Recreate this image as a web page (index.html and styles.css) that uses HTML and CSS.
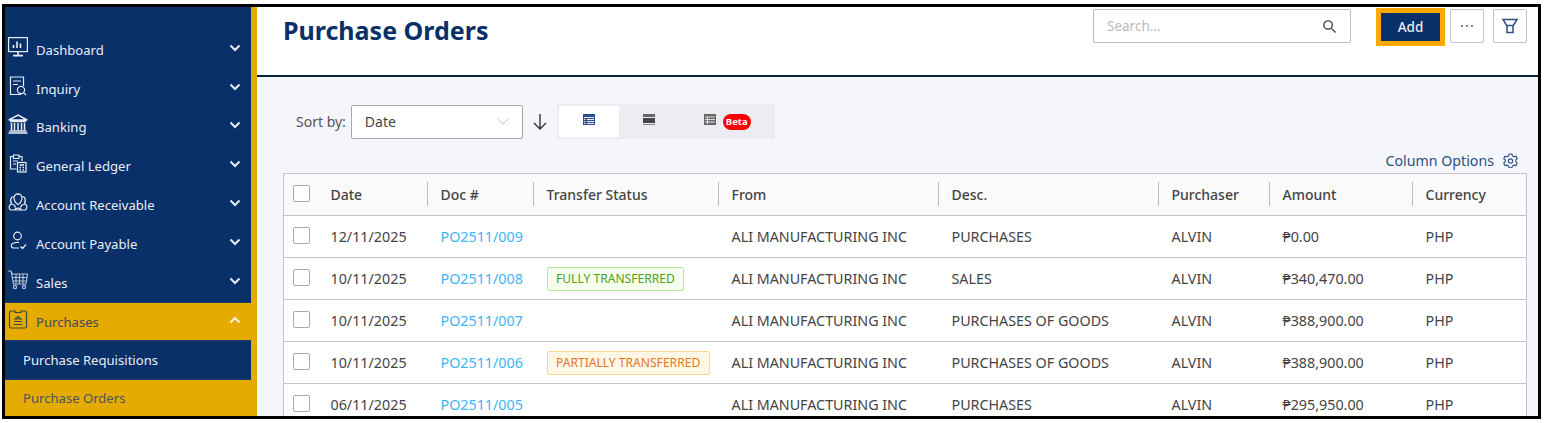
FILE: index.html
```html
<!doctype html>
<html lang="en">
  <head>
    <meta charset="UTF-8" />
    <title>Purchase Orders</title>
    <link rel="stylesheet" href="styles.css">
  </head>
  <body>
    <div class="frame">
      <nav class="sidebar">
        <a class="nav-item">
          <svg class="nav-icon" viewBox="0 0 20 20"><rect x="0.6" y="0.6" width="18.8" height="14"/><path d="M10 14.6v3.4M5 18.6h10M5.5 11v-3M9 11V4.5M12.5 11V6.5" stroke-width="1.600"/></svg>
          <span class="nav-label">Dashboard</span>
          <svg class="chev" viewBox="0 0 12 8"><path d="M1.5 1.5 6 6l4.5-4.5"/></svg>
        </a>
        <a class="nav-item">
          <svg class="nav-icon" viewBox="0 0 20 20"><path d="M13 18.5H2.5V1h13v9M5 5h8M5 8.5h5"/><circle cx="13" cy="14" r="3.6"/><path d="m15.6 16.6 2.4 2.4"/></svg>
          <span class="nav-label">Inquiry</span>
          <svg class="chev" viewBox="0 0 12 8"><path d="M1.5 1.5 6 6l4.5-4.5"/></svg>
        </a>
        <a class="nav-item">
          <svg class="nav-icon" viewBox="0 0 20 20"><path d="M0.8 6 10 1l9.2 5zM2 7.500h16M3.500 9v7M6.500 9v7M10 9v7M13.500 9v7M16.500 9v7M1.500 17h17M0.500 19h19" stroke-width="1.500"/></svg>
          <span class="nav-label">Banking</span>
          <svg class="chev" viewBox="0 0 12 8"><path d="M1.5 1.5 6 6l4.5-4.5"/></svg>
        </a>
        <a class="nav-item">
          <svg class="nav-icon" viewBox="0 0 20 20"><path d="M8.500 16H2.500V3.500H5.500M11 3.500h3V8M5.500 2h5.500v3.500H5.500zM5 8h5M5 11h3"/><rect x="9.500" y="9.500" width="8.500" height="9.500"/><path d="M11.500 12h4.500M11.500 14.500h1.500M14.500 14.500h1.500M11.500 17h1.500M14.500 17h1.500" stroke-width="1.500"/></svg>
          <span class="nav-label">General Ledger</span>
          <svg class="chev" viewBox="0 0 12 8"><path d="M1.5 1.5 6 6l4.5-4.5"/></svg>
        </a>
        <a class="nav-item">
          <svg class="nav-icon" viewBox="0 0 20 20"><path d="M6.500 18H3c-2-.5-2.500-3.500-1-5 .5-.6 1-1 1.500-1.200C2.500 9.500 2.500 7 3.500 5.500 4.200 4.500 5.500 4.500 6 5.500 6.500 3 8.500 1 10 2.500 11.500 1 13.500 3 14 5.500c.5-1 1.800-1 2.500 0 1 1.500 1 4 0 6.300.5.200 1 .6 1.500 1.200 1.500 1.500 1 4.500-1 5h-3.500zM6 6c.2 2.500 1.200 5 4 6.500 2.800-1.500 3.800-4 4-6.500M3.500 12c2 .2 3.500 1.500 4 3.500M16.500 12c-2 .2-3.500 1.500-4 3.500M6.500 18c1-2.500 6-2.500 7 0"/></svg>
          <span class="nav-label">Account Receivable</span>
          <svg class="chev" viewBox="0 0 12 8"><path d="M1.5 1.5 6 6l4.500-4.500"/></svg>
        </a>
        <a class="nav-item">
          <svg class="nav-icon" viewBox="0 0 20 20"><circle cx="9.500" cy="5" r="3.800"/><path d="M11 17H5.500c-2 0-3-2.600-1.500-4 1.500-1.300 4-1.700 7-1.500M12.500 15.500l2 2 3.500-4"/></svg>
          <span class="nav-label">Account Payable</span>
          <svg class="chev" viewBox="0 0 12 8"><path d="M1.5 1.5 6 6l4.500-4.500"/></svg>
        </a>
        <a class="nav-item">
          <svg class="nav-icon dim" viewBox="0 0 20 20"><path d="M0 1h3l1.500 3h15l-1.500 10H5.500L3 1M4.500 7.500h15M5 11h13.500M8 4v10M11.500 4v10M15 4v10"/><circle cx="7" cy="17" r="1.600"/><circle cx="16" cy="17" r="1.600"/></svg>
          <span class="nav-label">Sales</span>
          <svg class="chev" viewBox="0 0 12 8"><path d="M1.5 1.5 6 6l4.500-4.500"/></svg>
        </a>
        <a class="nav-item active">
          <svg class="nav-icon" viewBox="0 0 20 20"><path d="M7 2H3a1.500 1.500 0 0 0-1.500 1.500v14A1.500 1.500 0 0 0 3 19h14a1.500 1.500 0 0 0 1.500-1.500v-14A1.500 1.500 0 0 0 17 2h-4v1.500H7zM5.500 15.500h9M6 12.500h8M10 7.500l-3 2.500h6z"/></svg>
          <span class="nav-label">Purchases</span>
          <svg class="chev" viewBox="0 0 12 8"><path d="M1.500 6.500 6 2l4.500 4.500"/></svg>
        </a>
        <a class="nav-sub">Purchase Requisitions</a>
        <a class="nav-sub current">Purchase Orders</a>
      </nav>

      <main class="main">
        <header class="top-bar">
          <h1 class="title">Purchase Orders</h1>
          <div class="search">
            <span class="search-text">Search...</span>
            <svg class="search-icon" viewBox="0 0 16 16"><circle cx="6.500" cy="6.500" r="4.500"/><path d="m10 10 4.500 4.500"/></svg>
          </div>
          <button class="add-btn">Add</button>
          <button class="icon-btn more-btn">
            <svg viewBox="0 0 14 4" class="dots"><circle cx="2" cy="2" r="0.900"/><circle cx="7" cy="2" r="0.900"/><circle cx="12" cy="2" r="0.900"/></svg>
          </button>
          <button class="icon-btn">
            <svg viewBox="0 0 16 16" class="funnel"><path d="M1 1.500h14L11 8v6.500H5V8zM4.500 7.500h7"/></svg>
          </button>
        </header>

        <section class="content">
          <div class="sort-row">
            <span class="sort-label">Sort by:</span>
            <div class="select">
              <span>Date</span>
              <svg class="select-chev" viewBox="0 0 12 7"><path d="M0.500 0.500 6 6l5.500-5.500"/></svg>
            </div>
            <svg class="sort-arrow" viewBox="0 0 16 17"><path d="M8 1v15M2 10l6 6 6-6"/></svg>
            <div class="views">
              <div class="view on">
                <svg class="view-icon" viewBox="0 0 12 11"><rect width="12" height="11" fill="#2b4f8f"/><path d="M1 3.500h10M4 5.500h7M4 7.500h7M4 9.500h7M1 5.500h1.500M1 7.500h1.500M1 9.500h1.500" stroke="#fff" stroke-width="0.900"/></svg>
              </div>
              <div class="view">
                <svg class="view-icon" viewBox="0 0 12 11"><rect width="12" height="3" fill="#666"/><rect y="4" width="12" height="5" fill="#444"/><rect y="10" width="12" height="1" fill="#888"/></svg>
              </div>
              <div class="view view-beta">
                <svg class="view-icon" viewBox="0 0 12 11"><rect width="12" height="11" fill="#666"/><path d="M1 3h10M1 5.500h10M1 8h10M3.500 3v7" stroke="#eee" stroke-width="0.900"/></svg>
                <span class="beta">Beta</span>
              </div>
            </div>
          </div>

          <div class="col-options">
            <span>Column Options</span>
            <svg class="gear" viewBox="0 0 16 16"><path d="M6.500 1h3l.5 2 1.800 1 2-.6 1.400 2.600-1.500 1.500v1.900l1.500 1.500-1.400 2.600-2-.6-1.800 1-.5 2h-3l-.5-2-1.800-1-2 .6L.8 10.900l1.500-1.500V7.500L.8 6l1.400-2.600 2 .6L6 3z"/><circle cx="8" cy="8.500" r="2.300"/></svg>
          </div>

          <table class="orders">
            <colgroup>
              <col class="c-check"><col class="c-date"><col class="c-doc"><col class="c-status"><col class="c-from"><col class="c-desc"><col class="c-buyer"><col class="c-amount"><col>
            </colgroup>
            <thead>
              <tr>
                <th><span class="check"></span></th>
                <th>Date</th>
                <th>Doc #</th>
                <th>Transfer Status</th>
                <th>From</th>
                <th>Desc.</th>
                <th>Purchaser</th>
                <th>Amount</th>
                <th>Currency</th>
              </tr>
            </thead>
            <tbody>
              <tr>
                <td><span class="check"></span></td>
                <td>12/11/2025</td>
                <td><a class="doc">PO2511/009</a></td>
                <td></td>
                <td>ALI MANUFACTURING INC</td>
                <td>PURCHASES</td>
                <td>ALVIN</td>
                <td>₱0.00</td>
                <td>PHP</td>
              </tr>
              <tr>
                <td><span class="check"></span></td>
                <td>10/11/2025</td>
                <td><a class="doc">PO2511/008</a></td>
                <td><span class="tag tag-full">FULLY TRANSFERRED</span></td>
                <td>ALI MANUFACTURING INC</td>
                <td>SALES</td>
                <td>ALVIN</td>
                <td>₱340,470.00</td>
                <td>PHP</td>
              </tr>
              <tr>
                <td><span class="check"></span></td>
                <td>10/11/2025</td>
                <td><a class="doc">PO2511/007</a></td>
                <td></td>
                <td>ALI MANUFACTURING INC</td>
                <td>PURCHASES OF GOODS</td>
                <td>ALVIN</td>
                <td>₱388,900.00</td>
                <td>PHP</td>
              </tr>
              <tr>
                <td><span class="check"></span></td>
                <td>10/11/2025</td>
                <td><a class="doc">PO2511/006</a></td>
                <td><span class="tag tag-part">PARTIALLY TRANSFERRED</span></td>
                <td>ALI MANUFACTURING INC</td>
                <td>PURCHASES OF GOODS</td>
                <td>ALVIN</td>
                <td>₱388,900.00</td>
                <td>PHP</td>
              </tr>
              <tr>
                <td><span class="check"></span></td>
                <td>06/11/2025</td>
                <td><a class="doc">PO2511/005</a></td>
                <td></td>
                <td>ALI MANUFACTURING INC</td>
                <td>PURCHASES</td>
                <td>ALVIN</td>
                <td>₱295,950.00</td>
                <td>PHP</td>
              </tr>
            </tbody>
          </table>
        </section>
      </main>
    </div>
  </body>
</html>
```

FILE: styles.css
```css
html,
body {
  margin: 0;
  height: 423px;
  overflow: hidden;
  background-color: white;
}
body {
  font-family: "Noto Sans", "Open Sans", sans-serif;
  font-size: 14px;
  color: #444;
}
.frame {
  display: flex;
  height: 409px;
  margin: 4px 4px 4px 2px;
  border: 3px solid #000;
  overflow: hidden;
}

/* sidebar */
.sidebar {
  flex: none;
  width: 246px;
  padding-top: 23.4px;
  background-color: #0a3069;
  border-right: 6px solid #e5ab00;
}
.nav-item,
.nav-sub {
  display: flex;
  align-items: center;
  height: 38.8px;
  box-sizing: border-box;
  color: #e8edf5;
  font-size: 13.1px;
}
.nav-icon {
  flex: none;
  width: 20px;
  height: 20px;
  margin: -6px 8px 0 3px;
  fill: none;
  stroke: #e8edf5;
  stroke-width: 1.2;
}
.nav-icon.dim {
  stroke: #b4bfd0;
}
.nav-label {
  flex: 1;
}
.chev {
  width: 12px;
  height: 8px;
  margin: -4px 10px 0 0;
  fill: none;
  stroke: #e8edf5;
  stroke-width: 2;
}
.nav-item.active {
  padding-top: 1px;
  background-color: #e5ab00;
  color: #3d4a63;
  border-top: 1px solid #1d3a63;
  border-bottom: 1px solid #1d3a63;
}
.nav-item.active .nav-icon {
  stroke: #3d4a46;
}
.nav-item.active .chev {
  stroke: #f5f0e0;
}
.nav-sub {
  padding-left: 18px;
  border-bottom: 1px solid #1d3a63;
}
.nav-sub.current {
  padding-bottom: 2px;
  background-color: #e5ab00;
  color: #4a5468;
  border-bottom: none;
}

/* top bar */
.main {
  flex: 1;
  min-width: 0;
  display: flex;
  flex-direction: column;
  background-color: #f4f6fb;
}
.top-bar {
  flex: none;
  display: flex;
  align-items: flex-start;
  height: 67px;
  padding: 1px 11px 0 26px;
  background-color: white;
  border-bottom: 2px solid #0c2340;
}
.title {
  flex: 1;
  margin: 3px 0 0;
  font-size: 25px;
  line-height: 38px;
  font-weight: 700;
  color: #0a3069;
}
.search {
  display: flex;
  align-items: center;
  justify-content: space-between;
  box-sizing: border-box;
  width: 258px;
  height: 34px;
  margin-top: 1px;
  padding: 0 13px;
  background-color: white;
  border: 1px solid #bdbdbd;
  border-radius: 2px;
}
.search-text {
  color: #bbb;
  font-size: 13.5px;
}
.search-icon {
  width: 15px;
  height: 15px;
  fill: none;
  stroke: #444;
  stroke-width: 1.5;
}
.add-btn {
  box-sizing: border-box;
  width: 69px;
  height: 38px;
  margin: 0 5px 0 25px;
  padding: 0;
  border: 5px solid #ffa900;
  background-color: #0a3069;
  color: #e8edf5;
  font-family: inherit;
  font-size: 13.5px;
  font-weight: 500;
}
.icon-btn {
  display: flex;
  align-items: center;
  justify-content: center;
  box-sizing: border-box;
  width: 34px;
  height: 34px;
  margin: 1px 0 0;
  padding: 0;
  background-color: white;
  border: 1px solid #c4c4c4;
  border-radius: 2px;
}
.more-btn {
  margin-right: 9px;
}
.dots {
  width: 14px;
  height: 4px;
  fill: #444;
}
.funnel {
  width: 16px;
  height: 16px;
  fill: none;
  stroke: #2b4f7f;
  stroke-width: 1.5;
}

/* sort row */
.content {
  flex: 1;
  padding: 27px 11px 0 26px;
}
.sort-row {
  display: flex;
  align-items: center;
  height: 35px;
  padding-left: 13px;
}
.sort-label {
  margin-right: 5px;
  color: #555;
}
.select {
  display: flex;
  align-items: center;
  justify-content: space-between;
  box-sizing: border-box;
  width: 172px;
  height: 34px;
  padding: 0 13px;
  background-color: white;
  border: 1px solid #a8a8a8;
  border-radius: 2px;
}
.select-chev {
  width: 12px;
  height: 7px;
  fill: none;
  stroke: #c8c8c8;
}
.sort-arrow {
  width: 16px;
  height: 17px;
  margin: 0 9px;
  fill: none;
  stroke: #333;
  stroke-width: 1.4;
}
.views {
  display: flex;
  box-sizing: border-box;
  width: 218px;
  height: 35px;
  padding: 2px;
  background-color: #ebedf2;
  border-radius: 2px;
}
.view {
  display: flex;
  align-items: flex-start;
  justify-content: center;
  box-sizing: border-box;
  width: 60px;
  padding-top: 8px;
  border-radius: 2px;
}
.view.on {
  background-color: white;
}
.view-beta {
  width: auto;
  margin-left: 25px;
}
.view-icon {
  width: 12px;
  height: 11px;
}
.beta {
  margin-left: 7px;
  padding: 0 3px;
  height: 16px;
  margin-top: 0;
  line-height: 15px;
  border-radius: 8px;
  background-color: #f00;
  color: white;
  font-size: 9.5px;
  font-weight: 700;
}

/* column options */
.col-options {
  display: flex;
  justify-content: flex-end;
  align-items: center;
  height: 34px;
  padding: 9px 9px 0 0;
  box-sizing: border-box;
  color: #2b4f7f;
  font-size: 14.2px;
}
.gear {
  width: 15px;
  height: 15px;
  margin-left: 9px;
  fill: none;
  stroke: #2b4f7f;
  stroke-width: 1.2;
}

/* table */
.orders {
  width: 100%;
  table-layout: fixed;
  border-collapse: collapse;
  background-color: white;
  border: 1.5px solid #c4c4c4;
}
.c-check { width: 33px; }
.c-date { width: 110px; }
.c-doc { width: 106px; }
.c-status { width: 185px; }
.c-from { width: 220px; }
.c-desc { width: 220px; }
.c-buyer { width: 111px; }
.c-amount { width: 143px; }
.orders th,
.orders td {
  height: 41px;
  padding: 0 0 0 14px;
  border-bottom: 1.5px solid #c4c4c4;
  text-align: left;
  white-space: nowrap;
  font-size: 14.3px;
}
.orders th:first-child,
.orders td:first-child {
  padding-left: 9px;
}
.orders th {
  position: relative;
  background-color: #fafafa;
  font-size: 14px;
  font-weight: 500;
  color: #444;
}
.orders th:nth-child(n + 3)::after {
  content: "";
  position: absolute;
  left: 0;
  top: 8px;
  bottom: 9px;
  width: 1px;
  background-color: #bbb;
}
.check {
  display: block;
  box-sizing: border-box;
  width: 17px;
  height: 17px;
  margin-top: -3px;
  background-color: white;
  border: 1px solid #aaa;
  border-radius: 2px;
}
.doc {
  color: #40b4f5;
}
.tag {
  display: inline-block;
  box-sizing: border-box;
  height: 24px;
  padding: 0 8.500px;
  line-height: 22px;
  border-radius: 2px;
  font-size: 12.1px;
}
.tag-full {
  background-color: #f6ffed;
  border: 1px solid #b7eb8f;
  color: #4e9f1c;
}
.tag-part {
  background-color: #fff7e6;
  border: 1px solid #ffd591;
  color: #e2771e;
}
```
